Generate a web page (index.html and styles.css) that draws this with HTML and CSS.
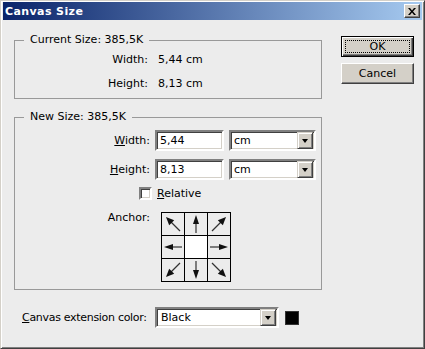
FILE: index.html
```html
<!DOCTYPE html>
<html lang="en">
<head>
    <meta charset="UTF-8">
    <title>Canvas Size</title>
    <link rel="stylesheet" href="styles.css">
</head>
<body>
    <div class="window">
        <div class="titlebar">
            <span class="title">Canvas Size</span>
            <span class="close-btn">
                <svg width="8" height="7" viewBox="0 0 8 7"><path d="M0 0h2l2 2.5L6 0h2L5 3.5 8 7H6L4 4.5 2 7H0l3-3.5z" fill="#000"/></svg>
            </span>
        </div>
        <div class="dialog-body">
            <div class="main">
                <div class="groups">
                    <fieldset class="group group-current">
                        <legend>Current Size: 385,5K</legend>
                        <div class="info-grid">
                            <span class="lbl">Width:</span><span>5,44 cm</span>
                            <span class="lbl">Height:</span><span>8,13 cm</span>
                        </div>
                    </fieldset>
                    <fieldset class="group group-new">
                        <legend>New Size: 385,5K</legend>
                        <div class="field-grid">
                            <span class="lbl"><u>W</u>idth:</span>
                            <span class="text-field">5,44</span>
                            <span class="select">cm<span class="drop"><span class="tri"></span></span></span>
                            <span class="lbl"><u>H</u>eight:</span>
                            <span class="text-field">8,13</span>
                            <span class="select">cm<span class="drop"><span class="tri"></span></span></span>
                        </div>
                        <div class="relative-row">
                            <span class="checkbox"></span><span><u>R</u>elative</span>
                        </div>
                        <div class="anchor-row">
                            <span class="anchor-lbl">Anchor:</span>
                            <div class="anchor-grid">
                                <span class="cell"><svg viewBox="0 0 22 22"><use href="#diag"/></svg></span>
                                <span class="cell"><svg viewBox="0 0 22 22"><use href="#up"/></svg></span>
                                <span class="cell"><svg viewBox="0 0 22 22"><use href="#diag" transform="rotate(90 11 11)"/></svg></span>
                                <span class="cell"><svg viewBox="0 0 22 22"><use href="#up" transform="rotate(270 11 11)"/></svg></span>
                                <span class="cell cell-center"></span>
                                <span class="cell"><svg viewBox="0 0 22 22"><use href="#up" transform="rotate(90 11 11)"/></svg></span>
                                <span class="cell"><svg viewBox="0 0 22 22"><use href="#diag" transform="rotate(270 11 11)"/></svg></span>
                                <span class="cell"><svg viewBox="0 0 22 22"><use href="#up" transform="rotate(180 11 11)"/></svg></span>
                                <span class="cell"><svg viewBox="0 0 22 22"><use href="#diag" transform="rotate(180 11 11)"/></svg></span>
                            </div>
                        </div>
                    </fieldset>
                </div>
                <div class="buttons">
                    <span class="btn btn-default"><span class="focus">OK</span></span>
                    <span class="btn">Cancel</span>
                </div>
            </div>
            <div class="ext-row">
                <span class="ext-lbl"><u>C</u>anvas extension color:</span>
                <span class="select select-wide">Black<span class="drop"><span class="tri"></span></span></span>
                <span class="swatch"></span>
            </div>
        </div>
    </div>

    <svg class="defs" width="0" height="0">
        <defs>
            <g id="up">
                <path d="M11 10.5V20" stroke="#333" stroke-width="1.2"/>
                <path d="M11 2l3 9H8z" fill="#111"/>
            </g>
            <g id="diag">
                <path d="M9 9l9 9" stroke="#333" stroke-width="1.2"/>
                <path d="M4 4l8.2 3.2-5 5z" fill="#111"/>
            </g>
        </defs>
    </svg>
</body>
</html>
```

FILE: styles.css
```css
* { box-sizing: border-box; }
html, body {
    margin: 0;
    padding: 0;
}
body {
    font-family: "DejaVu Sans", sans-serif;
    font-size: 11px;
    color: #000;
    background: #ececec;
}
.defs { position: absolute; }
.window {
    width: 425px;
    height: 349px;
    background: #ececec;
    border: 1px solid;
    border-color: #d4d0c8 #404040 #404040 #d4d0c8;
    box-shadow: inset 1px 1px #fff, inset -1px -1px #808080;
    padding: 1px 2px 2px 2px;
}
.titlebar {
    height: 18px;
    display: flex;
    align-items: center;
    justify-content: space-between;
    padding-left: 2px;
    background: linear-gradient(to right, #0a246a, #a6caf0);
}
.title {
    color: #fff;
    font-weight: bold;
    font-size: 11px;
    letter-spacing: 0.4px;
}
.close-btn {
    width: 16px;
    height: 14px;
    margin-right: 2px;
    display: flex;
    align-items: center;
    justify-content: center;
    background: #d4d0c8;
    border: 1px solid;
    border-color: #fff #404040 #404040 #fff;
    box-shadow: inset -1px -1px #808080;
}
.dialog-body {
    padding-left: 11px;
}
.main {
    display: flex;
}
.groups {
    width: 308px;
}
.group {
    margin: 0;
    padding: 0;
    min-width: 0;
    border: 1px solid #999;
}
.group legend {
    margin-left: 9px;
    padding: 0 6px;
    line-height: 14px;
}
.group-current {
    margin-top: 13px;
}
.group-new {
    margin-top: 11px;
}
.info-grid {
    display: grid;
    grid-template-columns: 133px auto;
    column-gap: 10px;
    line-height: 24px;
    padding: 1px 0 2px;
}
.lbl {
    text-align: right;
}
.field-grid {
    display: grid;
    grid-template-columns: 135px 69px 87px;
    grid-auto-rows: 21px;
    column-gap: 5px;
    row-gap: 8px;
    align-items: center;
    margin-top: 6px;
}
.text-field, .select, .checkbox {
    height: 21px;
    background: #fff;
    border: 2px solid;
    border-color: #808080 #fff #fff #808080;
    box-shadow: inset 1px 1px #404040, inset -1px -1px #d4d0c8;
}
.text-field {
    padding-left: 3px;
    line-height: 17px;
}
.select {
    display: flex;
    align-items: center;
    justify-content: space-between;
    padding: 0 1px 0 3px;
}
.select-wide {
    width: 124px;
    padding-left: 4px;
}
.drop {
    width: 16px;
    height: 17px;
    display: flex;
    align-items: center;
    justify-content: center;
    background: #d4d0c8;
    border: 1px solid;
    border-color: #d4d0c8 #404040 #404040 #d4d0c8;
    box-shadow: inset 1px 1px #fff, inset -1px -1px #808080;
}
.tri {
    width: 0;
    height: 0;
    border-left: 3.5px solid transparent;
    border-right: 3.5px solid transparent;
    border-top: 4px solid #000;
}
.relative-row {
    display: flex;
    align-items: center;
    gap: 5px;
    margin-top: 7px;
    padding-left: 124px;
    height: 13px;
}
.checkbox {
    width: 13px;
    height: 13px;
}
.anchor-row {
    display: flex;
    margin-top: 12px;
    padding-bottom: 7px;
}
.anchor-lbl {
    width: 135px;
    text-align: right;
    margin-top: -1px;
}
.anchor-grid {
    margin-left: 11px;
    display: grid;
    grid-template-columns: repeat(3, 22px);
    grid-auto-rows: 22px;
    gap: 1px;
    background: #000;
    border: 1px solid #000;
}
.cell {
    background: #ececec;
}
.cell svg {
    display: block;
    width: 22px;
    height: 22px;
}
.cell-center {
    background: #fff;
}
.buttons {
    margin-left: 19px;
    margin-top: 16px;
    display: flex;
    flex-direction: column;
    gap: 6px;
}
.btn {
    width: 73px;
    height: 21px;
    display: flex;
    align-items: center;
    justify-content: center;
    background: #d4d0c8;
    border: 1px solid;
    border-color: #fff #404040 #404040 #fff;
    box-shadow: inset -1px -1px #808080;
}
.btn-default {
    border: 1px solid #000;
    box-shadow: inset 1px 1px #fff, inset -1px -1px #404040, inset -2px -2px #808080;
    padding: 3px;
}
.focus {
    flex: 1;
    align-self: stretch;
    display: flex;
    align-items: center;
    justify-content: center;
    border: 1px dotted #000;
}
.ext-row {
    display: flex;
    align-items: center;
    margin-top: 17px;
    padding-left: 8px;
}
.ext-lbl {
    width: 133px;
    flex-shrink: 0;
    white-space: nowrap;
    letter-spacing: -0.3px;
}
.swatch {
    width: 14px;
    height: 14px;
    margin-left: 6px;
    background: #000;
    border: 1px solid #333;
}
```
